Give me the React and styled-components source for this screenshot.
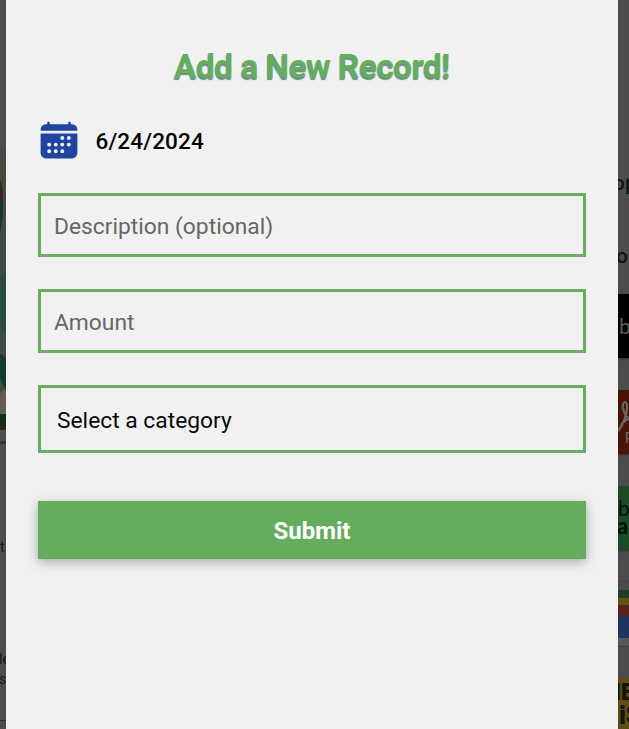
import React from 'react';
import styled, { createGlobalStyle } from 'styled-components';
import { IoCalendar } from 'react-icons/io5';

const GlobalStyle = createGlobalStyle`
  *, *::before, *::after { box-sizing: border-box; }
  body { margin: 0; background: #4c4c4c; font-family: Roboto, sans-serif; }
`;

const Page = styled.div`
  display: grid;
  grid-template-columns: 6px 612px 11px;
  width: 629px;
  height: 729px;
  overflow: hidden;
`;

const Strip = styled.div`
  display: flex;
  flex-direction: column;
  min-width: 0;
  overflow: hidden;
  background: #4c4c4c;
`;

const Band = styled.div`
  flex: none;
  height: ${(p) => p.$h}px;
  background: ${(p) => p.$bg || 'transparent'};
  overflow: hidden;
`;

const Tile = styled(Band)`
  box-shadow: 0 1px 2px rgba(0, 0, 0, 0.45);
`;

const Snippet = styled.div`
  height: ${(p) => p.$h}px;
  flex: none;
  line-height: ${(p) => p.$h}px;
  margin-left: ${(p) => p.$shift || 0}px;
  font-family: ${(p) => p.$font || 'Roboto'}, sans-serif;
  font-size: ${(p) => p.$size}px;
  font-weight: ${(p) => p.$weight || 400};
  color: ${(p) => p.$color || '#131313'};
  white-space: nowrap;
`;

const Art = styled.svg`
  display: block;
  flex: none;
`;

const Panel = styled.main`
  display: flex;
  flex-direction: column;
  padding: 47px 32px 0;
  background: #f1f1f1;
`;

const Title = styled.h1`
  margin: 0;
  height: 40px;
  line-height: 40px;
  text-align: center;
  font-size: 33.4px;
  font-weight: 700;
  letter-spacing: -0.5px;
  color: #65ad5c;
  text-shadow: -0.5px 1.5px 1px #6d8c86;
`;

const DateRow = styled.div`
  display: flex;
  align-items: center;
  gap: 16px;
  height: 42px;
  margin-top: 32px;
  margin-left: -0.5px;
  font-size: 22.5px;
  font-weight: 500;
  letter-spacing: 0.15px;
  color: #050505;
`;

const DateText = styled.span`
  padding-top: 2px;
`;

const CalendarIcon = styled(IoCalendar)`
  flex: none;
  width: 42px;
  height: 42px;
  color: #2144a0;
`;

const Form = styled.form`
  display: flex;
  flex-direction: column;
  gap: 32px;
  margin-top: 32px;
`;

const Input = styled.input`
  width: 100%;
  height: 64px;
  padding: 2px 13px 0;
  border: 3px solid #69ad62;
  border-radius: 0;
  outline: none;
  background: transparent;
  font: 400 22.8px Roboto, sans-serif;
  color: #000;
  &::placeholder { color: #666; opacity: 1; }
`;

const Select = styled.select`
  appearance: none;
  width: 100%;
  height: 68px;
  padding: 2px 16px 0;
  border: 3px solid #69ad62;
  border-radius: 0;
  background: transparent;
  font: 400 22.8px Roboto, sans-serif;
  color: #090909;
`;

const Submit = styled.button`
  height: 58px;
  margin-top: 16px;
  padding: 2px 0 0;
  border: 0;
  background: #65ad5c;
  box-shadow: 0 3px 10px rgba(0, 0, 0, 0.3);
  font: 700 24px Roboto, sans-serif;
  color: #fff;
`;

function LeftStrip() {
  return (
    <Strip>
      <Band $h={148} />
      <Art width="6" height="296" viewBox="0 0 6 296">
        <path fill="#454a42" d="M0 0h6v296H0z" />
        <path fill="#354f45" d="M0 80h6v216H0z" opacity=".45" />
        <path fill="#3f211b" d="M0 32Q3 38 3 50H0z" />
        <path fill="#1e352b" d="M0 50h3q1 20-3 34z" />
        <path fill="#294c3e" d="M0 132q2-6 6-8v60q-4-1-6-6z" />
        <path fill="#183a2a" d="M0 206q4 1 6 5v30q-4-4-6-12z" />
        <path fill="#625f51" d="M0 246q3-6 6-3v23H0z" />
        <path fill="#152e14" d="M0 266h6v16H0z" />
        <path fill="#514e45" d="M0 282h6v11H0z" />
        <path fill="#373630" d="M0 293h6v3H0z" />
      </Art>
      <Band $h={93} />
      <Snippet $h={20} $size={14} $color="#191919">t</Snippet>
      <Band $h={92} />
      <Snippet $h={20} $size={14} $shift={-1} $color="#191919">le</Snippet>
      <Snippet $h={20} $size={14} $shift={-1} $color="#191919">s</Snippet>
      <Band $h={31} />
      <Band $h={1} $bg="#343434" />
    </Strip>
  );
}

function RightStrip() {
  return (
    <Strip>
      <Band $h={170} />
      <Snippet $h={26} $size={21} $shift={-5} $weight={500}>op</Snippet>
      <Band $h={47} />
      <Snippet $h={26} $size={21} $shift={-2} $weight={500}>o</Snippet>
      <Band $h={25} />
      <Tile $h={64} $bg="#000">
        <Snippet $h={64} $size={21} $shift={-4} $font="Lato" $color="#5d5d5d">lb</Snippet>
      </Tile>
      <Band $h={32} />
      <Tile $h={64} $bg="#4a1508">
        <Art width="11" height="64" viewBox="0 0 11 64">
          <path
            d="M0 41C5 35 10 23 9 15C8 10 4 12 5 18C6 24 9 28 13 31M3 35C6 31 9 29 12 29"
            fill="none"
            stroke="#6a6563"
            strokeWidth="2.2"
          />
          <text x="7" y="53" fontFamily="Roboto, sans-serif" fontSize="14" fill="#77706e">P</text>
        </Art>
      </Tile>
      <Band $h={32} />
      <Tile $h={64} $bg="#1b4a27">
        <Band $h={12} />
        <Snippet $h={20} $size={21} $shift={0} $font="Lato" $color="#071009">b</Snippet>
        <Snippet $h={16} $size={22} $shift={-1} $font="Lato" $weight={700} $color="#071009">a</Snippet>
      </Tile>
      <Band $h={31} />
      <Band $h={1} $bg="#444" />
      <Band $h={8} />
      <Art width="11" height="48" viewBox="0 0 11 48">
        <path fill="#203e24" d="M0 0h11v8H0z" />
        <path fill="#655315" d="M0 8h11v7H0z" />
        <path fill="#203462" d="M0 15h11v33H0z" />
        <path fill="#592419" d="M0 15h11v11Q5 27 0 25z" />
      </Art>
      <Band $h={8} $bg="#575757" />
      <Band $h={1} $bg="#404040" />
      <Band $h={31} />
      <Tile $h={51} $bg="#604b13">
        <Band $h={4} />
        <Snippet $h={21} $size={24} $shift={-14} $weight={900} $color="#15150f">HE</Snippet>
        <Snippet $h={26} $size={25} $shift={1} $weight={900} $color="#15150f">iS</Snippet>
      </Tile>
    </Strip>
  );
}

export default function App() {
  return (
    <>
      <GlobalStyle />
      <Page>
        <LeftStrip />
        <Panel>
          <Title>Add a New Record!</Title>
          <DateRow>
            <CalendarIcon />
            <DateText>6/24/2024</DateText>
          </DateRow>
          <Form onSubmit={(e) => e.preventDefault()}>
            <Input type="text" placeholder="Description (optional)" />
            <Input type="text" placeholder="Amount" />
            <Select defaultValue="">
              <option value="">Select a category</option>
            </Select>
            <Submit type="submit">Submit</Submit>
          </Form>
        </Panel>
        <RightStrip />
      </Page>
    </>
  );
}
